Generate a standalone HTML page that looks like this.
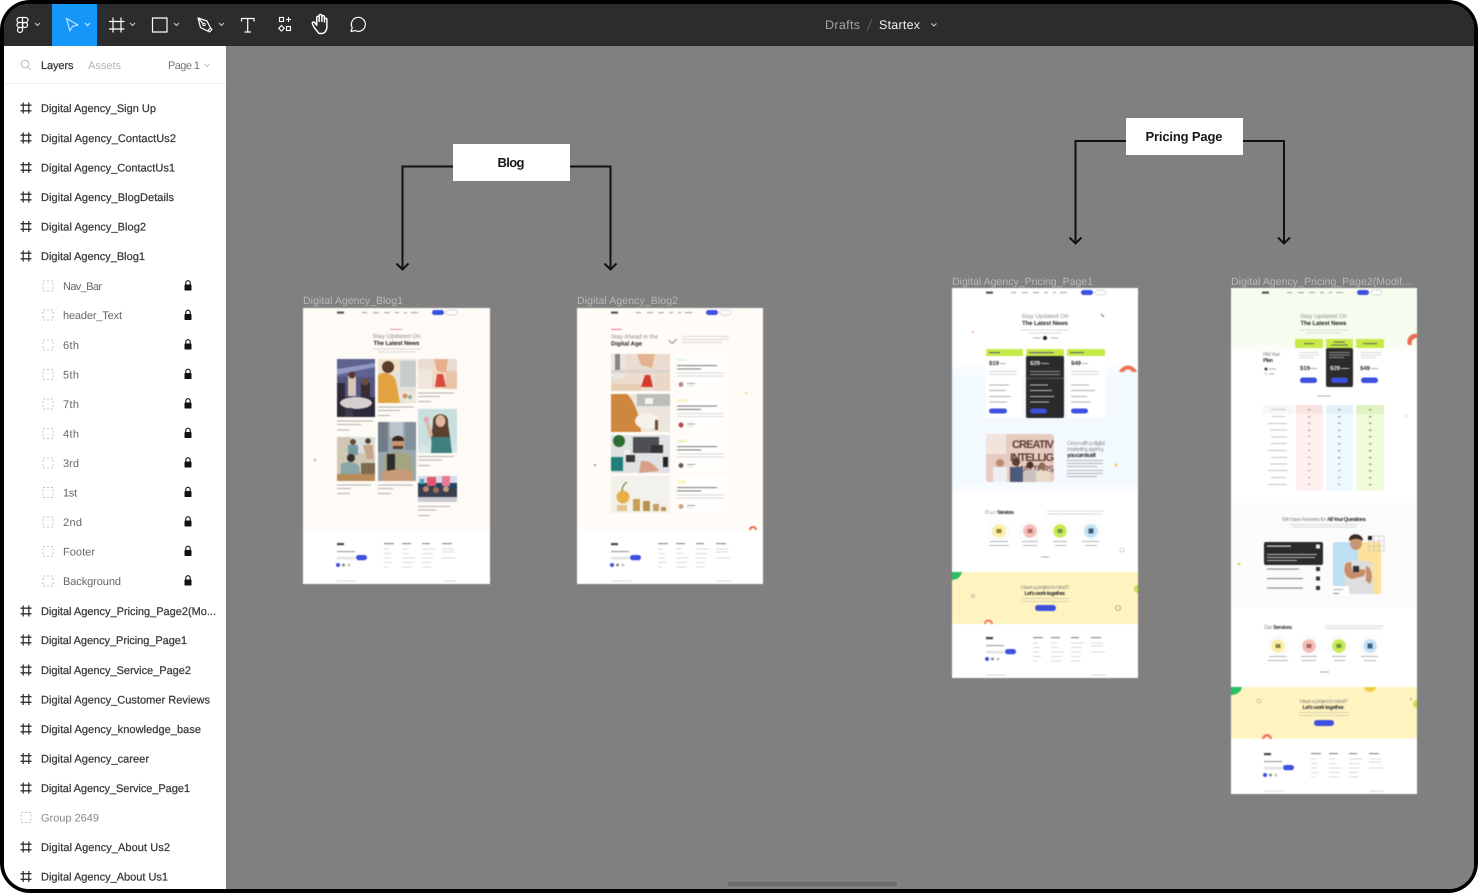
<!DOCTYPE html>
<html lang="en">
<head>
<meta charset="utf-8">
<title>Startex - Figma</title>
<style>
html,body{margin:0;padding:0;background:#fff;width:1478px;height:894px;overflow:hidden}
#outer{position:absolute;left:0;top:0;width:1478px;height:893px;background:#000;border-radius:30px;overflow:hidden}
#inner{position:absolute;left:4px;top:4px;width:1470px;height:885px;border-radius:25px;overflow:hidden;background:#808080}
#art{position:absolute;left:-4px;top:-4px;display:block}
text{font-family:"Liberation Sans",sans-serif;text-rendering:geometricPrecision}
.l{font-size:11px;fill:#3a3a3a;stroke:#3a3a3a;stroke-width:.25px}
.s{font-size:11px;fill:#666}
.t{font-size:10.5px;fill:#b8b8b8}
.g{fill:#d8d8d8}.d{fill:#ababab}.k{fill:#333}.w{fill:#fff}.u{fill:#3d50e0}
.blur{filter:blur(.5px)}
.hi{stroke:#fff;fill:none;stroke-width:1.2;stroke-linecap:round;stroke-linejoin:round}
.ch{stroke:#c8c8c8;fill:none;stroke-width:1.1}
#foot rect[fill="#555"]{fill:#8c8c8c}
#foot rect[fill="#666"]{fill:#999}
#row2 rect[fill="#555"]{fill:#808080}
#row2 rect[fill="#777"]{fill:#a0a0a0}
.blur>rect[fill="#888"]{fill:#b0b0b0}
.blur>rect[fill="#555"]{fill:#858585}
.blur>rect[fill="#999"]{fill:#bcbcbc}
.blur>g[fill="#888"] rect{fill:#b0b0b0}
.blur>g[fill="#999"] rect{fill:#c4c4c4}
</style>
</head>
<body>
<div id="outer"><div id="inner">
<svg id="art" width="1478" height="894" viewBox="0 0 1478 894" xmlns="http://www.w3.org/2000/svg">
<defs>
<linearGradient id="bluefade" x1="0" y1="0" x2="0" y2="1"><stop offset="0" stop-color="#fff"/><stop offset=".12" stop-color="#f3faff"/><stop offset=".88" stop-color="#f3faff"/><stop offset="1" stop-color="#fff"/></linearGradient>
<linearGradient id="greenfade" x1="0" y1="0" x2="0" y2="1"><stop offset="0" stop-color="#f6fdee"/><stop offset=".8" stop-color="#f6fdee"/><stop offset="1" stop-color="#fff"/></linearGradient>
<g id="fr"><g fill="none" stroke="#333" stroke-width="1.3"><path d="M-2.8-5.5V5.5M2.8-5.5V5.5M-5.500-2.800H5.500M-5.500 2.800H5.500"/></g></g>
<g id="gp"><rect x="-5" y="-5" width="10" height="10" fill="none" stroke="#c4c4c4" stroke-width="1" stroke-dasharray="2 2"/></g>
<g id="lk"><rect x="-3.500" y="-1" width="7" height="6" rx=".8" fill="#111"/><path d="M-2.200-1V-2.600a2.200 2.200 0 0 1 4.400 0V-1" fill="none" stroke="#111" stroke-width="1.100"/></g>
<g id="nav">
<rect x="34" y="3.500" width="7" height="2.200" fill="#555"/>
<rect x="59" y="4" width="5" height="1.200" class="d"/><rect x="70" y="4" width="6" height="1.200" class="d"/><rect x="81" y="4" width="6" height="1.200" class="d"/><rect x="92" y="4" width="4" height="1.200" class="d"/><rect x="101" y="4" width="3" height="1.200" class="d"/><rect x="108" y="4" width="7" height="1.200" class="d"/>
<rect x="129" y="2" width="12" height="5" rx="2.500" class="u"/><rect x="143" y="2.200" width="11" height="4.600" rx="2.300" fill="#fff" stroke="#999" stroke-width=".4"/>
</g>
<g id="foot">
<rect x="34" y="-41" width="7" height="2.200" fill="#444"/>
<rect x="81" y="-41" width="10" height="1.200" fill="#555"/><rect x="99" y="-41" width="9" height="1.200" fill="#555"/><rect x="119" y="-41" width="8" height="1.200" fill="#555"/><rect x="139" y="-41" width="10" height="1.200" fill="#555"/>
<rect x="81" y="-35.500" width="5" height="1" class="g"/><rect x="81" y="-31" width="7" height="1" class="g"/><rect x="81" y="-26.500" width="6" height="1" class="g"/><rect x="81" y="-22" width="8" height="1" class="g"/><rect x="81" y="-17.500" width="4" height="1" class="g"/>
<rect x="99" y="-35.500" width="6" height="1" class="g"/><rect x="99" y="-31" width="7" height="1" class="g"/><rect x="99" y="-26.500" width="13" height="1" class="g"/><rect x="99" y="-22" width="11" height="1" class="g"/><rect x="99" y="-17.500" width="10" height="1" class="g"/>
<rect x="119" y="-35.500" width="13" height="1" class="g"/><rect x="119" y="-31" width="11" height="1" class="g"/><rect x="119" y="-26.500" width="10" height="1" class="g"/><rect x="119" y="-22" width="9" height="1" class="g"/><rect x="119" y="-17.500" width="9" height="1" class="g"/>
<rect x="139" y="-35.500" width="12" height="1" class="g"/><rect x="139" y="-32.500" width="12" height="1" class="g"/><rect x="139" y="-26.500" width="14" height="1" class="g"/>
<rect x="34" y="-33" width="18" height="1.100" fill="#666"/>
<rect x="34" y="-27" width="18" height="1" class="g"/><rect x="34" y="-25.400" width="18" height=".5" fill="#bbb"/>
<rect x="53" y="-29" width="11" height="5.200" rx="2.600" class="u"/>
<circle cx="35" cy="-19" r="2" class="u"/><circle cx="40.500" cy="-19" r="1.500" fill="#888"/><circle cx="46" cy="-19" r="1.500" fill="#c4c4c4"/>
<rect x="34" y="-3.500" width="20" height="1" class="g"/><rect x="140" y="-3.500" width="14" height="1" class="g"/>
</g>
<g id="svc">
<circle cx="0" cy="0" r="11" fill="#fbfbfb"/><circle cx="31" cy="0" r="11" fill="#fbfbfb"/><circle cx="61" cy="0" r="11" fill="#fbfbfb"/><circle cx="92" cy="0" r="11" fill="#fbfbfb"/>
<circle cx="0" cy="0" r="6.800" fill="#fbeea6"/><circle cx="31" cy="0" r="6.800" fill="#f6bdb6"/><circle cx="61" cy="0" r="6.800" fill="#c9ea55"/><circle cx="92" cy="0" r="6.800" fill="#c2e2f6"/>
<rect x="-2.500" y="-2" width="5" height="4" fill="#8a8640"/><rect x="28.500" y="-2" width="5" height="4" fill="#a96a65"/><rect x="58.500" y="-2" width="5" height="4" fill="#6a9a40"/><rect x="89.500" y="-2.500" width="5" height="5" fill="#3d5f7a"/>
<rect x="-9" y="10" width="18" height="1" fill="#b4b4b4"/><rect x="-10" y="14" width="20" height="1" fill="#b4b4b4"/>
<rect x="23" y="10" width="16" height="1" fill="#b4b4b4"/><rect x="24" y="14" width="14" height="1" fill="#b4b4b4"/>
<rect x="54" y="10" width="14" height="1" fill="#b4b4b4"/><rect x="56" y="14" width="11" height="1" fill="#b4b4b4"/>
<rect x="83" y="10" width="17" height="1" fill="#b4b4b4"/><rect x="86" y="14" width="12" height="1" fill="#b4b4b4"/>
</g>
<g id="row2">
<rect x="677" y="354" width="52" height="36" fill="#fffefc"/>
<rect x="677" y="365" width="40" height="1.100" fill="#555"/><rect x="677" y="368.400" width="24" height="1.100" fill="#555"/>
<rect x="677" y="372.500" width="47" height="1" class="g"/><rect x="677" y="375.500" width="47" height="1" class="g"/>
<rect x="687" y="383" width="8" height="1" fill="#777"/><rect x="687" y="385.500" width="6" height=".8" class="g"/>
</g>
</defs>

<!-- canvas -->
<rect x="0" y="0" width="1478" height="894" fill="#808080"/>

<!-- toolbar -->
<rect x="0" y="0" width="1478" height="46" fill="#2c2c2c"/>
<rect x="52" y="4" width="45" height="42" fill="#1497f8"/>
<g class="hi" stroke-width="1.100">
<path d="M22.500 17.500h-3a2.500 2.500 0 0 0 0 5h3zM22.500 17.500h3a2.500 2.500 0 0 1 0 5h-3zM22.500 22.500h-3a2.500 2.500 0 0 0 0 5h3zM22.500 27.500v2.500a2.500 2.500 0 1 1-3-2.500"/><circle cx="25" cy="25" r="2.500"/>
</g>
<path d="M35 23l2.500 2.500L40 23" class="ch"/>
<path d="M66.500 18.500L78 25l-5.500 1.300-2.600 4.700z" fill="none" stroke="#bfe3ff" stroke-width="1.200" stroke-linejoin="round"/>
<path d="M85 23l2.500 2.500L90 23" fill="none" stroke="#cfeaff" stroke-width="1.100"/>
<path class="hi" d="M113 18v14M121 18v14M109.500 21.500h14.500M109.500 29h14.500"/>
<path d="M130 23l2.500 2.500L135 23" class="ch"/>
<rect x="152.500" y="18" width="14.500" height="14" class="hi"/>
<path d="M174 23l2.500 2.500L179 23" class="ch"/>
<path class="hi" stroke-width="1.100" d="M198 18l9 3 3.500 7-3 3-7-3.500zM198 18l5 5.500M210.500 28l1.500 1.500-2.500 2.500-1.500-1.500"/><circle cx="204" cy="24.500" r="1.200" fill="none" stroke="#fff"/>
<path d="M219 23l2.500 2.500L224 23" class="ch"/>
<path class="hi" d="M241.500 21v-2.500h12.500V21M247.700 18.500V32M245 32h5.500"/>
<g fill="none" stroke="#fff" stroke-width="1.100"><rect x="279.500" y="17.500" width="4" height="4"/><path d="M288.500 17v5M286 19.500h5"/><path d="M281.500 25.500l2.800 2.800-2.800 2.800-2.800-2.800z"/><rect x="286.500" y="26.500" width="4" height="4"/></g>
<path class="hi" transform="translate(321 25) scale(1.220) translate(-319.500 -25.500)" d="M316 30c-1.500-1.500-3-4-3.500-5.500-.4-1.500 1.200-2 2-.8l1.500 2V19.500c0-1.500 2-1.500 2 0v3-4.500c0-1.500 2.200-1.500 2.200 0v4.500-3.500c0-1.500 2.100-1.500 2.100 0V23v-2c0-1.400 2-1.400 2 0v6c0 3-1.800 5.500-4.500 5.500h-1.500c-1 0-1.600-1.500-2.300-2.500z" stroke-width="1"/>
<path class="hi" d="M351 31.500l1.200-3.800a7 7 0 1 1 3 2.900z" stroke-width="1.200"/>
<text x="825" y="29" font-size="12.500" fill="#a4a4a4" textLength="35" lengthAdjust="spacing">Drafts</text>
<path d="M867 31l5-12" stroke="#5e5e5e" stroke-width="1"/>
<text x="879" y="29" font-size="12.500" fill="#efefef" textLength="41" lengthAdjust="spacing">Startex</text>
<path d="M931.500 23.500l2.500 2.500 2.500-2.500" class="ch"/>

<!-- sidebar -->
<rect x="0" y="46" width="226" height="848" fill="#fff"/>
<g fill="none" stroke="#c4c4c4" stroke-width="1.200"><circle cx="25" cy="64" r="3.800"/><path d="M28 67l2.800 2.800"/></g>
<text x="41" y="69" class="l" textLength="32.500" lengthAdjust="spacing">Layers</text>
<text x="88" y="69" font-size="11" fill="#b2b2b2" textLength="33" lengthAdjust="spacing">Assets</text>
<text x="168" y="69" font-size="11" fill="#777" textLength="32" lengthAdjust="spacing">Page 1</text>
<path d="M204.500 64l2.500 2.500 2.500-2.500" fill="none" stroke="#c4c4c4" stroke-width="1"/>
<rect x="4" y="83" width="222" height="1" fill="#efefef"/>

<use href="#fr" x="26" y="108"/><text x="41" y="112" class="l" textLength="115" lengthAdjust="spacing">Digital Agency_Sign Up</text>
<use href="#fr" x="26" y="138"/><text x="41" y="142" class="l" textLength="135" lengthAdjust="spacing">Digital Agency_ContactUs2</text>
<use href="#fr" x="26" y="167.500"/><text x="41" y="171.500" class="l" textLength="134" lengthAdjust="spacing">Digital Agency_ContactUs1</text>
<use href="#fr" x="26" y="197"/><text x="41" y="201" class="l" textLength="133" lengthAdjust="spacing">Digital Agency_BlogDetails</text>
<use href="#fr" x="26" y="226.500"/><text x="41" y="230.500" class="l" textLength="105" lengthAdjust="spacing">Digital Agency_Blog2</text>
<use href="#fr" x="26" y="256"/><text x="41" y="260" class="l" textLength="104" lengthAdjust="spacing">Digital Agency_Blog1</text>

<use href="#gp" x="48" y="286"/><text x="63" y="290" class="s" textLength="39" lengthAdjust="spacing">Nav_Bar</text><use href="#lk" x="188" y="285.500"/>
<use href="#gp" x="48" y="315"/><text x="63" y="319" class="s" textLength="59" lengthAdjust="spacing">header_Text</text><use href="#lk" x="188" y="315"/>
<use href="#gp" x="48" y="345"/><text x="63" y="349" class="s" textLength="16" lengthAdjust="spacing">6th</text><use href="#lk" x="188" y="344.500"/>
<use href="#gp" x="48" y="374.500"/><text x="63" y="378.500" class="s" textLength="16" lengthAdjust="spacing">5th</text><use href="#lk" x="188" y="374"/>
<use href="#gp" x="48" y="404"/><text x="63" y="408" class="s" textLength="16" lengthAdjust="spacing">7th</text><use href="#lk" x="188" y="403.500"/>
<use href="#gp" x="48" y="433.500"/><text x="63" y="437.500" class="s" textLength="16" lengthAdjust="spacing">4th</text><use href="#lk" x="188" y="433"/>
<use href="#gp" x="48" y="463"/><text x="63" y="467" class="s" textLength="16" lengthAdjust="spacing">3rd</text><use href="#lk" x="188" y="462.500"/>
<use href="#gp" x="48" y="492.500"/><text x="63" y="496.500" class="s" textLength="14" lengthAdjust="spacing">1st</text><use href="#lk" x="188" y="492"/>
<use href="#gp" x="48" y="522"/><text x="63" y="526" class="s" textLength="19" lengthAdjust="spacing">2nd</text><use href="#lk" x="188" y="521.500"/>
<use href="#gp" x="48" y="551.500"/><text x="63" y="555.500" class="s" textLength="32" lengthAdjust="spacing">Footer</text><use href="#lk" x="188" y="551"/>
<use href="#gp" x="48" y="581"/><text x="63" y="585" class="s" textLength="58" lengthAdjust="spacing">Background</text><use href="#lk" x="188" y="580.500"/>

<use href="#fr" x="26" y="611"/><text x="41" y="615" class="l" textLength="175" lengthAdjust="spacing">Digital Agency_Pricing_Page2(Mo...</text>
<use href="#fr" x="26" y="640"/><text x="41" y="644" class="l" textLength="146" lengthAdjust="spacing">Digital Agency_Pricing_Page1</text>
<use href="#fr" x="26" y="670"/><text x="41" y="674" class="l" textLength="150" lengthAdjust="spacing">Digital Agency_Service_Page2</text>
<use href="#fr" x="26" y="699.500"/><text x="41" y="703.500" class="l" textLength="169" lengthAdjust="spacing">Digital Agency_Customer Reviews</text>
<use href="#fr" x="26" y="729"/><text x="41" y="733" class="l" textLength="160" lengthAdjust="spacing">Digital Agency_knowledge_base</text>
<use href="#fr" x="26" y="758.500"/><text x="41" y="762.500" class="l" textLength="108" lengthAdjust="spacing">Digital Agency_career</text>
<use href="#fr" x="26" y="788"/><text x="41" y="792" class="l" textLength="149" lengthAdjust="spacing">Digital Agency_Service_Page1</text>
<use href="#gp" x="26" y="817.500"/><text x="41" y="821.500" font-size="11" fill="#8a8a8a" textLength="58" lengthAdjust="spacing">Group 2649</text>
<use href="#fr" x="26" y="847"/><text x="41" y="851" class="l" textLength="129" lengthAdjust="spacing">Digital Agency_About Us2</text>
<use href="#fr" x="26" y="876.500"/><text x="41" y="880.500" class="l" textLength="127" lengthAdjust="spacing">Digital Agency_About Us1</text>

<!-- annotations -->
<g fill="none" stroke="#111" stroke-width="2">
<path d="M453 166.500H402.500V269M396.500 263.500l6 6 6-6"/>
<path d="M570 166.500H610.500V269M604.500 263.500l6 6 6-6"/>
<path d="M1126 141H1075.500V243M1069.500 237.500l6 6 6-6"/>
<path d="M1243 141H1284V243M1278 237.500l6 6 6-6"/>
</g>
<rect x="453" y="144" width="117" height="37" fill="#fff"/>
<text x="511" y="167" font-size="13" font-weight="bold" fill="#181818" text-anchor="middle" textLength="27" lengthAdjust="spacing">Blog</text>
<rect x="1126" y="118" width="117" height="37" fill="#fff"/>
<text x="1184" y="141" font-size="13" font-weight="bold" fill="#181818" text-anchor="middle" textLength="77" lengthAdjust="spacing">Pricing Page</text>

<!-- frame labels -->
<text x="303" y="304" class="t" textLength="100" lengthAdjust="spacing">Digital Agency_Blog1</text>
<text x="577" y="304" class="t" textLength="101" lengthAdjust="spacing">Digital Agency_Blog2</text>
<text x="952" y="285" class="t" textLength="141" lengthAdjust="spacing">Digital Agency_Pricing_Page1</text>
<text x="1231" y="285" class="t" textLength="180" lengthAdjust="spacing">Digital Agency_Pricing_Page2(Modif...</text>

<!-- BLOG 1 -->
<g class="blur">
<rect x="303" y="308" width="187" height="276" fill="#fff"/>
<rect x="303" y="308" width="187" height="222" fill="#fefaf5"/>
<use href="#nav" x="303" y="308"/>
<rect x="390" y="329" width="12" height=".8" fill="#c88"/>
<text x="396.500" y="338" font-size="6" fill="#8a8a8a" text-anchor="middle" textLength="48" lengthAdjust="spacing">Stay Updated On</text>
<text x="396.500" y="345" font-size="6" font-weight="bold" fill="#222" text-anchor="middle" textLength="46" lengthAdjust="spacing">The Latest News</text>
<rect x="373" y="348.500" width="48" height="1" class="g"/><rect x="378" y="351.500" width="38" height="1" class="g"/>

<svg x="337" y="359" width="38" height="58"><rect width="38" height="58" fill="#55557f"/><rect y="0" width="38" height="18" fill="#5d6290"/><path d="M0 10L38 4V8L0 16z" fill="#9298bf"/><rect x="11" y="17" width="8" height="20" fill="#d9c6bb"/><circle cx="15" cy="16" r="3.500" fill="#5a3a30"/><rect x="24" y="24" width="9" height="14" fill="#3a2a33"/><circle cx="28" cy="23" r="3.500" fill="#6b4a3a"/><rect x="0" y="24" width="8" height="18" fill="#2e2a3a"/><rect x="0" y="38" width="38" height="20" fill="#2a2a38"/><ellipse cx="19" cy="44" rx="16" ry="6" fill="#d6cfcf"/><rect x="8" y="49" width="8" height="9" fill="#41394a"/></svg>
<svg x="378" y="359" width="38" height="44"><rect width="38" height="44" fill="#e7e2d8"/><rect x="22" y="2" width="16" height="26" fill="#c7cdcd"/><rect x="0" y="0" width="22" height="12" fill="#f0e2cd"/><circle cx="10" cy="8" r="6" fill="#5d3c2a"/><path d="M0 16C6 12 15 14 18 22L22 44H0z" fill="#e3a240"/><ellipse cx="30" cy="38" rx="9" ry="5" fill="#efe7de"/><circle cx="27" cy="37" r="2.500" fill="#d88c6a"/><circle cx="32" cy="38" r="2" fill="#7eb79b"/></svg>
<svg x="418" y="359" width="39" height="30"><rect width="39" height="30" fill="#f0d9c9"/><rect width="39" height="10" fill="#e9dcd2"/><rect x="0" y="10" width="14" height="20" fill="#f1e6dc"/><path d="M16 0h14l-2 14-9-2z" fill="#e7b08b"/><path d="M19 15h6l3 13h-11z" fill="#d84c3c"/><rect x="28" y="12" width="11" height="18" fill="#e8c4a8"/></svg>
<svg x="418" y="409" width="39" height="44"><rect width="39" height="44" fill="#c9e0de"/><rect y="36" width="39" height="8" fill="#d6e6e2"/><path d="M15 12c0-9 15-9 15 0 0 8 3 16 2 22H14c-2-6 1-14 1-22z" fill="#5a412f"/><ellipse cx="22.500" cy="12" rx="5" ry="6" fill="#dfb79e"/><path d="M14 28h18l2 16H13z" fill="#3e8080"/><path d="M7 12l3 0 5 14-3 4z" fill="#dfb79e"/><rect x="6" y="8" width="5" height="5" fill="#e5a8b2"/></svg>
<svg x="418" y="476" width="39" height="26"><rect width="39" height="26" fill="#24425f"/><rect width="39" height="7" fill="#d6dcea"/><rect x="9" y="1" width="9" height="9" fill="#e3566c"/><rect x="24" y="0" width="8" height="10" fill="#e77a95"/><rect x="2" y="3" width="4" height="5" fill="#4da0b0"/><rect x="0" y="12" width="39" height="9" fill="#3a3f4f"/><circle cx="8" cy="13" r="3" fill="#b98a68"/><circle cx="18" cy="14" r="3" fill="#9d6e50"/><circle cx="28" cy="13" r="3" fill="#c79d7a"/><rect x="0" y="21" width="39" height="5" fill="#c9c9d4"/></svg>
<svg x="337" y="437" width="38" height="44"><rect width="38" height="44" fill="#cfc7b4"/><rect x="14" y="0" width="24" height="16" fill="#dadfe0"/><circle cx="16" cy="5" r="3" fill="#6b4c36"/><rect x="11" y="8" width="10" height="10" fill="#7599a0"/><circle cx="31" cy="4" r="2.800" fill="#5a3d2c"/><path d="M26 8h10v14h-6z" fill="#c6a585"/><circle cx="14" cy="21" r="4" fill="#39302a"/><path d="M4 27c4-3 14-3 18 2l2 15H3z" fill="#8aa7a8"/><rect x="24" y="26" width="14" height="18" fill="#7d6a50"/><rect x="0" y="37" width="38" height="7" fill="#b88c58"/></svg>
<svg x="378" y="422" width="38" height="59"><rect width="38" height="59" fill="#9aa6ae"/><rect x="0" y="0" width="10" height="30" fill="#707d88"/><rect x="27" y="0" width="11" height="28" fill="#84909a"/><rect x="12" y="0" width="13" height="16" fill="#bcc5cc"/><circle cx="20" cy="21" r="6" fill="#c6946f"/><path d="M14 19c0-7 12-7 12 0z" fill="#3a2a20"/><rect x="15" y="24" width="10" height="3" fill="#5a3c2c"/><path d="M7 33c6-4 20-4 26 0l3 26H4z" fill="#a3a582"/><rect x="9" y="32" width="8" height="19" fill="#2e2d2c"/><path d="M4 50c8-3 24-3 30 0v9H4z" fill="#c99a78"/></svg>

<rect x="337" y="420.500" width="36" height="1" fill="#888"/><rect x="337" y="424" width="24" height="1" fill="#888"/><rect x="337" y="429.500" width="12" height="1" fill="#888"/>
<rect x="378" y="406.500" width="36" height="1" fill="#888"/><rect x="378" y="410" width="22" height="1" fill="#888"/><rect x="378" y="415" width="12" height="1" fill="#888"/>
<rect x="418" y="392.500" width="36" height="1" fill="#888"/><rect x="418" y="396" width="22" height="1" fill="#888"/><rect x="418" y="401" width="13" height="1" fill="#888"/>
<rect x="418" y="456" width="36" height="1" fill="#888"/><rect x="418" y="459.500" width="24" height="1" fill="#888"/><rect x="418" y="465" width="12" height="1" fill="#888"/>
<rect x="337" y="484.500" width="34" height="1" fill="#888"/><rect x="337" y="488" width="14" height="1" fill="#888"/><rect x="337" y="493" width="13" height="1" fill="#888"/>
<rect x="378" y="484.500" width="35" height="1" fill="#888"/><rect x="378" y="488" width="15" height="1" fill="#888"/><rect x="378" y="493" width="13" height="1" fill="#888"/>
<rect x="418" y="506" width="32" height="1" fill="#888"/><rect x="418" y="509.500" width="18" height="1" fill="#888"/><rect x="418" y="515" width="12" height="1" fill="#888"/>
<circle cx="315" cy="460" r="1" fill="#d8788a"/>
<use href="#foot" x="303" y="584"/>
</g>

<!-- BLOG 2 -->
<g class="blur">
<rect x="577" y="308" width="186" height="276" fill="#fff"/>
<rect x="577" y="308" width="186" height="222" fill="#fffbf7"/>
<use href="#nav" x="577" y="308"/>
<rect x="611" y="329" width="11" height=".8" fill="#d57"/>
<text x="611" y="338.500" font-size="6" fill="#8a8a8a" textLength="47" lengthAdjust="spacing">Stay Ahead in the</text>
<text x="611" y="345.500" font-size="6" font-weight="bold" fill="#222" textLength="31" lengthAdjust="spacing">Digital Age</text>
<path d="M669 340c2 3 3 4 4 3s2-3 4-4" fill="none" stroke="#666" stroke-width=".7"/>
<rect x="682" y="336" width="47" height="1" class="g"/><rect x="682" y="339" width="47" height="1" class="g"/><rect x="682" y="342" width="40" height="1" class="g"/>

<svg x="611" y="354" width="59" height="37"><rect width="59" height="37" fill="#ecdcd0"/><rect x="0" y="0" width="14" height="24" fill="#e9e7e4"/><rect x="4" y="0" width="5" height="18" fill="#8d8580"/><path d="M26 0h18l-3 14-11-3z" fill="#e3b28f"/><rect y="16" width="59" height="3" fill="#d9d3cc"/><path d="M34 21h5l3 12h-12z" fill="#d43b2e"/><rect x="44" y="20" width="15" height="17" fill="#ead7c6"/><rect y="30" width="30" height="7" fill="#e7cdb6"/></svg>
<svg x="611" y="394" width="59" height="38"><rect width="59" height="38" fill="#ebe5dd"/><rect x="26" y="0" width="33" height="12" fill="#bcbcb8"/><path d="M0 0h16c8 8 12 20 14 38H0z" fill="#cf873f"/><ellipse cx="36" cy="27" rx="12" ry="8" fill="#f6f1ea"/><rect x="34" y="4" width="8" height="6" fill="#f3f3f0"/><rect x="44" y="26" width="3" height="10" fill="#6d4a30"/></svg>
<svg x="611" y="435" width="59" height="38"><rect width="59" height="38" fill="#dfe1e3"/><circle cx="8" cy="6" r="6" fill="#2e6d32"/><rect x="22" y="2" width="26" height="16" fill="#4d4f52"/><rect x="0" y="22" width="12" height="14" fill="#1f7f7a"/><circle cx="16" cy="18" r="3.500" fill="#f0efec"/><rect x="15" y="20" width="9" height="7" fill="#3a3a3a"/><path d="M30 26c8-1 14 4 18 10l-20 2z" fill="#d89f88"/><rect x="40" y="10" width="12" height="8" fill="#333"/><rect x="52" y="22" width="5" height="10" fill="#222"/></svg>
<svg x="611" y="476" width="59" height="37"><rect width="59" height="37" fill="#f3f1eb"/><circle cx="12" cy="21" r="6.500" fill="#e8b04c"/><path d="M11 15c0-4 2-7 5-9" stroke="#6d8a3a" fill="none" stroke-width="1.200"/><rect x="22" y="23" width="7" height="12" fill="#c99f58"/><rect x="32" y="25" width="7" height="10" fill="#b8914f"/><rect x="42" y="28" width="6" height="7" fill="#c4a060"/><rect x="50" y="31" width="5" height="4" fill="#b89450"/><rect x="6" y="29" width="10" height="6" fill="#e0c48f"/></svg>

<use href="#row2"/><use href="#row2" y="40.500"/><use href="#row2" y="81"/><use href="#row2" y="122"/>
<rect x="677" y="358.500" width="9" height="3" fill="#e3f7f0"/><rect x="677" y="399" width="10" height="3" fill="#f7f3c9"/><rect x="677" y="439.500" width="10" height="3" fill="#e6f7c6"/><rect x="677" y="480.500" width="9" height="3" fill="#f8f4c4"/>
<circle cx="681" cy="384.500" r="2.500" fill="#b98d80"/><circle cx="681" cy="425" r="2.500" fill="#b04b4b"/><circle cx="681" cy="465.500" r="2.500" fill="#665a5a"/><circle cx="681" cy="506.500" r="2.500" fill="#d8a080"/>
<path d="M749 530a4 4 0 0 1 8 0h-2a2 2 0 0 0-4 0z" fill="#e8694a"/>
<circle cx="595" cy="465" r="1" fill="#888"/><circle cx="746" cy="393" r="1" fill="#e8d060"/>
<use href="#foot" x="577" y="584"/>
</g>

<!-- PRICING 1 -->
<g class="blur">
<rect x="952" y="288" width="186" height="390" fill="#fff"/>
<rect x="952" y="360" width="186" height="137" fill="url(#bluefade)"/>
<use href="#nav" x="952" y="288"/>
<text x="1045" y="318" font-size="6" fill="#8a8a8a" text-anchor="middle" textLength="47" lengthAdjust="spacing">Stay Updated On</text>
<text x="1045" y="325" font-size="6" font-weight="bold" fill="#222" text-anchor="middle" textLength="46" lengthAdjust="spacing">The Latest News</text>
<rect x="1021" y="329.500" width="48" height="1" class="g"/><rect x="1028" y="332.500" width="34" height="1" class="g"/>
<rect x="1033" y="337.500" width="8" height="1" class="d"/><circle cx="1045" cy="338" r="2" fill="#222"/><rect x="1051" y="337.500" width="7" height="1" class="d"/>
<rect x="986" y="349" width="37" height="8" rx="1.500" fill="#c8ea47"/><rect x="1026" y="349" width="38" height="8" rx="1.500" fill="#c8ea47"/><rect x="1067" y="349" width="38" height="8" rx="1.500" fill="#c8ea47"/>
<rect x="989" y="352" width="11" height="1.200" fill="#667"/><rect x="1029" y="352" width="25" height="1.200" fill="#667"/><rect x="1070" y="352" width="14" height="1.200" fill="#667"/>
<rect x="986" y="356" width="37" height="62" fill="#fff"/><rect x="1067" y="356" width="38" height="62" fill="#fff"/>
<rect x="1026" y="356" width="38" height="62" rx="2" fill="#2b2b2b"/>
<text x="989" y="365" font-size="6" font-weight="bold" fill="#333">$19</text><rect x="1000" y="363" width="6" height="1" class="d"/>
<text x="1030" y="365" font-size="6" font-weight="bold" fill="#eee">$29</text><rect x="1041" y="363" width="8" height="1" fill="#bbb"/>
<text x="1071" y="365" font-size="6" font-weight="bold" fill="#333">$49</text><rect x="1082" y="363" width="6" height="1" class="d"/>
<g class="g"><rect x="989" y="371" width="28" height="1"/><rect x="989" y="374" width="28" height="1"/><rect x="1071" y="371" width="28" height="1"/><rect x="1071" y="374" width="28" height="1"/></g>
<rect x="1030" y="371" width="30" height="1" fill="#8e8e8e"/><rect x="1030" y="374" width="30" height="1" fill="#8e8e8e"/><rect x="1026" y="378" width="38" height=".6" fill="#777"/>
<g fill="#888"><rect x="989" y="384.500" width="20" height="1"/><rect x="989" y="390" width="17" height="1"/><rect x="989" y="396" width="22" height="1"/><rect x="989" y="401.500" width="18" height="1"/><rect x="1071" y="384.500" width="18" height="1"/><rect x="1071" y="390" width="24" height="1"/><rect x="1071" y="396" width="16" height="1"/><rect x="1071" y="401.500" width="20" height="1"/></g>
<g fill="#bbb"><rect x="1030" y="384.500" width="18" height="1"/><rect x="1030" y="390" width="22" height="1"/><rect x="1030" y="396" width="24" height="1"/><rect x="1030" y="401.500" width="19" height="1"/></g>
<rect x="989" y="408.500" width="18" height="5" rx="2.500" class="u"/><rect x="1030" y="408.500" width="17" height="5" rx="2.500" class="u"/><rect x="1071" y="408.500" width="17" height="5" rx="2.500" class="u"/>
<path d="M1119 372a9.500 9.500 0 0 1 18 0h-5a4.500 4.500 0 0 0-8 0z" fill="#ee7554"/>
<circle cx="973" cy="332" r="1" fill="#e88"/><path d="M1101 314l3 3" stroke="#666" stroke-width=".9"/>
<svg x="986" y="434" width="68" height="48"><rect width="68" height="48" rx="3" fill="#e8cbc0"/><rect width="20" height="20" fill="#f0e4dc"/><text x="26" y="14" font-size="11" font-weight="bold" fill="#5d3d36" textLength="42" lengthAdjust="spacing">CREATIV</text><text x="24" y="27" font-size="11" font-weight="bold" fill="#5d3d36" textLength="44" lengthAdjust="spacing">INTELLIG</text><text x="30" y="38" font-size="9" font-weight="bold" fill="#7a5c55" textLength="38" lengthAdjust="spacing">MATTERS</text>
<circle cx="14" cy="29" r="4" fill="#b98d76"/><rect x="7" y="33" width="14" height="15" fill="#eeeef0"/><circle cx="30" cy="28" r="4" fill="#5a3f30"/><rect x="24" y="33" width="13" height="15" fill="#4c5a7a"/><circle cx="44" cy="31" r="3.500" fill="#4d3428"/><rect x="38" y="36" width="12" height="12" fill="#c8c0c0"/><circle cx="56" cy="32" r="3.500" fill="#8e6a50"/><rect x="50" y="37" width="14" height="11" fill="#eadbc9"/></svg>
<text x="1067" y="445" font-size="6" fill="#999" textLength="38" lengthAdjust="spacing">Grow with a digital</text>
<text x="1067" y="451" font-size="6" fill="#999" textLength="37" lengthAdjust="spacing">marketing agency</text>
<text x="1067" y="457" font-size="6" font-weight="bold" fill="#333" textLength="29" lengthAdjust="spacing">you can trust!</text>
<g class="d"><rect x="1067" y="460" width="36" height=".9"/><rect x="1067" y="463" width="36" height=".9"/><rect x="1067" y="466" width="30" height=".9"/><rect x="1067" y="470" width="36" height=".9"/><rect x="1067" y="473" width="36" height=".9"/><rect x="1067" y="476" width="30" height=".9"/></g>
<circle cx="1116" cy="465" r="1.500" fill="#e8d050"/>
<text x="985" y="514" font-size="5.500" fill="#888" textLength="11" lengthAdjust="spacing">Our</text><text x="997" y="514" font-size="5.500" font-weight="bold" fill="#333" textLength="17" lengthAdjust="spacing">Services</text>
<rect x="1047" y="510.500" width="57" height="1" class="g"/><rect x="1047" y="513.500" width="55" height="1" class="g"/>
<use href="#svc" x="999" y="531"/>
<rect x="1041" y="556.500" width="8" height="1" class="d"/><circle cx="1122" cy="550" r="2" fill="none" stroke="#aaa" stroke-width=".6"/>
<rect x="952" y="572" width="186" height="52" fill="#fff3bf"/>
<path d="M952 572h10a10 10 0 0 1-10 8z" fill="#2bbd63"/>
<path d="M984 624a4.500 4.500 0 0 1 9 0h-2a2.500 2.500 0 0 0-5 0z" fill="#ee7554"/><path d="M1138 585a4 4 0 0 0 0 8z" fill="#c8de4a"/>
<text x="1045" y="589" font-size="5.500" fill="#888" text-anchor="middle" textLength="48" lengthAdjust="spacing">Have a project in mind?</text>
<text x="1045" y="595" font-size="5.500" font-weight="bold" fill="#333" text-anchor="middle" textLength="41" lengthAdjust="spacing">Let's work together.</text>
<rect x="1021" y="598" width="48" height="1" fill="#d8d0b0"/><rect x="1021" y="601" width="48" height="1" fill="#d8d0b0"/>
<rect x="1035" y="605" width="21" height="6" rx="3" class="u"/>
<circle cx="973" cy="596" r="1.500" fill="none" stroke="#999" stroke-width=".6"/><circle cx="1118" cy="608" r="2.500" fill="none" stroke="#777" stroke-width=".6"/>
<use href="#foot" x="952" y="678"/>
</g>

<!-- PRICING 2 -->
<g class="blur">
<rect x="1231" y="288" width="186" height="506" fill="#fff"/>
<rect x="1231" y="288" width="186" height="66" fill="url(#greenfade)"/>
<use href="#nav" x="1228" y="288"/>
<text x="1323.500" y="318" font-size="6" fill="#8a8a8a" text-anchor="middle" textLength="47" lengthAdjust="spacing">Stay Updated On</text>
<text x="1323.500" y="325" font-size="6" font-weight="bold" fill="#222" text-anchor="middle" textLength="46" lengthAdjust="spacing">The Latest News</text>
<rect x="1299" y="329.500" width="49" height="1" class="g"/><rect x="1306" y="332.500" width="35" height="1" class="g"/>
<rect x="1295" y="339" width="28" height="9" rx="1" fill="#c8ea47"/><rect x="1326" y="339" width="27" height="9" rx="1" fill="#c8ea47"/><rect x="1356" y="339" width="28" height="9" rx="1" fill="#c8ea47"/>
<rect x="1304" y="343" width="10" height="1.200" fill="#675"/><rect x="1334" y="341.500" width="11" height="1.200" fill="#675"/><rect x="1331" y="344.500" width="17" height="1.200" fill="#675"/><rect x="1363" y="343" width="14" height="1.200" fill="#675"/>
<rect x="1326" y="348" width="27" height="39" rx="2" fill="#2b2b2b"/>
<text x="1263" y="356" font-size="5.500" fill="#888" textLength="17" lengthAdjust="spacing">Pick Your</text>
<text x="1263" y="362" font-size="5.500" font-weight="bold" fill="#333" textLength="10" lengthAdjust="spacing">Plan</text>
<circle cx="1266" cy="369" r="1.500" fill="#444"/><rect x="1269" y="368.500" width="7" height="1" class="d"/><circle cx="1266" cy="374" r="1.500" fill="#ddd"/><rect x="1269" y="373.500" width="5" height="1" class="d"/>
<g class="g"><rect x="1299" y="352" width="20" height="1"/><rect x="1299" y="354.500" width="20" height="1"/><rect x="1299" y="357" width="15" height="1"/><rect x="1361" y="352" width="20" height="1"/><rect x="1361" y="354.500" width="20" height="1"/><rect x="1361" y="357" width="15" height="1"/></g>
<rect x="1329" y="352" width="21" height="1" fill="#8e8e8e"/><rect x="1329" y="354.500" width="21" height="1" fill="#8e8e8e"/><rect x="1329" y="357" width="15" height="1" fill="#8e8e8e"/>
<text x="1300" y="370" font-size="6" font-weight="bold" fill="#333">$19</text><rect x="1310" y="368" width="7" height="1" class="d"/>
<text x="1330" y="370" font-size="6" font-weight="bold" fill="#eee">$29</text><rect x="1341" y="368" width="8" height="1" fill="#bbb"/>
<text x="1360" y="370" font-size="6" font-weight="bold" fill="#333">$49</text><rect x="1371" y="368" width="7" height="1" class="d"/>
<rect x="1300" y="377.500" width="17" height="5.500" rx="2.700" class="u"/><rect x="1331" y="377.500" width="17" height="5.500" rx="2.700" class="u"/><rect x="1361" y="377.500" width="17" height="5.500" rx="2.700" class="u"/>
<path d="M1408 345a8 8 0 0 1 9-11v4a5 5 0 0 0-5 7z" fill="#ee6d55"/>
<rect x="1317" y="395.500" width="14" height="1" fill="#888"/>
<rect x="1296" y="405" width="27" height="86" rx="2" fill="#fdf0ef"/><rect x="1326" y="405" width="27" height="86" rx="2" fill="#eef9fe"/><rect x="1356" y="405" width="28" height="86" rx="2" fill="#effbd9"/>
<rect x="1296" y="405" width="27" height="9" fill="#f7e3e0"/><rect x="1326" y="405" width="27" height="9" fill="#e0f1f8"/><rect x="1356" y="405" width="28" height="9" fill="#e0f2c4"/>
<rect x="1263" y="405" width="31" height="9" fill="#f7f7f7"/>
<g fill="#999">
<rect x="1271" y="409" width="15" height="1"/><rect x="1272" y="416" width="13" height="1"/><rect x="1268" y="423" width="19" height="1"/><rect x="1270" y="429.500" width="17" height="1"/><rect x="1271" y="436.500" width="16" height="1"/><rect x="1271" y="443" width="16" height="1"/><rect x="1268" y="450" width="19" height="1"/><rect x="1271" y="457" width="16" height="1"/><rect x="1270" y="463.500" width="17" height="1"/><rect x="1268" y="470" width="20" height="1"/><rect x="1271" y="477" width="15" height="1"/><rect x="1268" y="484" width="19" height="1"/>
</g>
<g fill="#b8a8a8"><rect x="1308" y="409" width="2.500" height="1.500"/><rect x="1308" y="416" width="2.500" height="1.500"/><rect x="1308" y="422.500" width="2.500" height="1.500"/><rect x="1308" y="429.500" width="2.500" height="1.500"/><rect x="1308" y="436" width="2.500" height="1"/><rect x="1308" y="443" width="2.500" height="1"/><rect x="1308" y="450" width="2.500" height="1"/><rect x="1308" y="457" width="2.500" height="1"/><rect x="1308" y="463.500" width="2.500" height="1"/><rect x="1308" y="470" width="2.500" height="1"/><rect x="1308" y="477" width="2.500" height="1"/><rect x="1308" y="484" width="2.500" height="1"/></g>
<g fill="#9aaab0"><rect x="1338" y="409" width="2.500" height="1.500"/><rect x="1338" y="416" width="2.500" height="1.500"/><rect x="1338" y="422.500" width="2.500" height="1.500"/><rect x="1338" y="429.500" width="2.500" height="1.500"/><rect x="1338" y="436" width="2.500" height="1.500"/><rect x="1338" y="443" width="2.500" height="1.500"/><rect x="1338" y="450" width="2.500" height="1.500"/><rect x="1338" y="457" width="2.500" height="1.500"/><rect x="1338" y="463.500" width="2.500" height="1"/><rect x="1338" y="470" width="2.500" height="1"/><rect x="1338" y="477" width="2.500" height="1"/><rect x="1338" y="484" width="2.500" height="1"/></g>
<g fill="#8fb060"><rect x="1369" y="409" width="2.500" height="1.500"/><rect x="1369" y="416" width="2.500" height="1.500"/><rect x="1369" y="422.500" width="2.500" height="1.500"/><rect x="1369" y="429.500" width="2.500" height="1.500"/><rect x="1369" y="436" width="2.500" height="1.500"/><rect x="1369" y="443" width="2.500" height="1.500"/><rect x="1369" y="450" width="2.500" height="1.500"/><rect x="1369" y="457" width="2.500" height="1.500"/><rect x="1369" y="463.500" width="2.500" height="1.500"/><rect x="1369" y="470" width="2.500" height="1.500"/><rect x="1369" y="477" width="2.500" height="1.500"/><rect x="1369" y="484" width="2.500" height="1.500"/></g>
<circle cx="1407" cy="416" r="1" fill="#e8dd70"/>
<rect x="1231" y="503" width="186" height="104" fill="#fbfbfb"/>
<text x="1282" y="521" font-size="5.500" fill="#888" textLength="44" lengthAdjust="spacing">We have Answers for</text>
<text x="1327" y="521" font-size="5.500" font-weight="bold" fill="#333" textLength="39" lengthAdjust="spacing">All Your Questions</text>
<rect x="1290" y="524" width="68" height="1" class="g"/><rect x="1292" y="526.500" width="64" height="1" class="g"/>
<rect x="1264" y="542" width="59" height="23" rx="2" fill="#2b2b2b"/>
<rect x="1267" y="545.500" width="24" height="1.200" fill="#ddd"/><rect x="1316" y="544.500" width="4" height="4" fill="#eee"/>
<rect x="1267" y="554" width="50" height="1" fill="#999"/><rect x="1267" y="557" width="48" height="1" fill="#999"/><rect x="1267" y="560" width="30" height="1" fill="#999"/>
<rect x="1267" y="568.500" width="32" height="1.100" fill="#555"/><rect x="1267" y="578" width="36" height="1.100" fill="#555"/><rect x="1267" y="587.500" width="36" height="1.100" fill="#555"/>
<rect x="1316" y="567" width="4" height="4" fill="#333"/><rect x="1316" y="576.500" width="4" height="4" fill="#333"/><rect x="1316" y="586" width="4" height="4" fill="#333"/>
<rect x="1333" y="542" width="28" height="44" rx="2" fill="#bcdff4"/><rect x="1358" y="542" width="23" height="52" rx="2" fill="#fce29a"/>
<path d="M1343 563c4-3 24-3 29 0l2 31h-28z" fill="#dedede"/>
<path d="M1346 563c-3 6-2 14 6 16l12-3 2-6-6-1-8 2-1-9z" fill="#c98d69"/><path d="M1366 566c5 1 8 10 4 18l-4-3z" fill="#c98d69"/>
<rect x="1353" y="566" width="6" height="6" fill="#333"/>
<ellipse cx="1356" cy="543" rx="6" ry="7" fill="#c99574"/><path d="M1349 541c-1-9 14-9 14 0-4-3-10-3-14 0z" fill="#3f2a1e"/>
<rect x="1331" y="586" width="18" height="10" fill="#fff"/><rect x="1333" y="589" width="10" height="1" fill="#aaa"/><rect x="1333" y="593" width="6" height="1" fill="#555"/>
<g fill="none" stroke="#bbb" stroke-width=".5"><rect x="1369" y="536" width="15" height="15"/><path d="M1374 536v15M1379 536v15M1369 541h15M1369 546h15"/></g><rect x="1368" y="536" width="4" height="4" fill="#222"/>
<circle cx="1239" cy="564" r="1.500" fill="#eed868"/>
<text x="1264" y="629" font-size="5.500" fill="#888" textLength="8" lengthAdjust="spacing">Our</text><text x="1273" y="629" font-size="5.500" font-weight="bold" fill="#333" textLength="19" lengthAdjust="spacing">Services</text>
<rect x="1325" y="625.500" width="58" height="1" class="g"/><rect x="1326" y="628" width="56" height="1" class="g"/>
<use href="#svc" x="1278" y="646"/>
<rect x="1320" y="671.500" width="9" height="1" class="d"/>
<rect x="1231" y="687" width="186" height="51.500" fill="#fff3bf"/>
<path d="M1231 687h11a11 9 0 0 1-11 8z" fill="#2bbd63"/>
<path d="M1364 687h12a6 5 0 0 1-12 0z" fill="#f0cd48"/>
<path d="M1262 739a5 5 0 0 1 10 0h-2.500a2.500 2.500 0 0 0-5 0z" fill="#ee7554"/>
<path d="M1417 700a4 4 0 0 0 0 8z" fill="#c8de4a"/>
<text x="1323.500" y="703" font-size="5.500" fill="#888" text-anchor="middle" textLength="48" lengthAdjust="spacing">Have a project in mind?</text>
<text x="1323.500" y="709" font-size="5.500" font-weight="bold" fill="#333" text-anchor="middle" textLength="42" lengthAdjust="spacing">Let's work together.</text>
<rect x="1299" y="712" width="50" height="1" fill="#d8d0b0"/><rect x="1299" y="715" width="50" height="1" fill="#d8d0b0"/>
<rect x="1314" y="720" width="20" height="6" rx="3" class="u"/>
<circle cx="1259" cy="701" r="2" fill="none" stroke="#999" stroke-width=".6"/><circle cx="1411" cy="699" r="1" fill="#dd8877"/>
<use href="#foot" x="1230" y="794"/>
</g>

<!-- scrollbar -->
<rect x="727" y="881" width="171" height="6" rx="3" fill="#6e6e6e" stroke="#8e8e8e" stroke-width=".8"/>
</svg>
</div></div>
</body>
</html>
